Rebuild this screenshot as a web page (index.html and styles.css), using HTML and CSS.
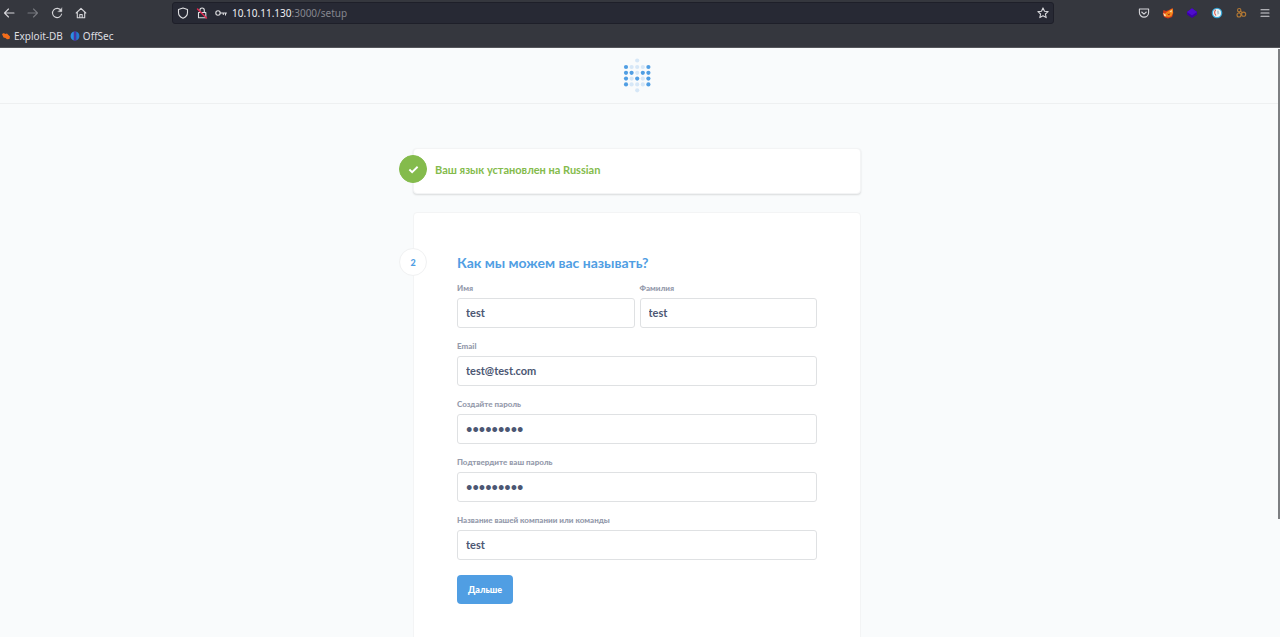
FILE: index.html
```html
<!DOCTYPE html>
<html lang="ru">
<head>
<meta charset="utf-8">
<meta name="viewport" content="width=device-width, initial-scale=1">
<title>Setup</title>
<link rel="stylesheet" href="styles.css">
</head>
<body>
<div class="browser">
  <div class="chrome">
    <div class="toolbar">
      <nav class="nav">
        <button type="button" class="tool" aria-label="Back"><svg viewBox="0 0 12 12"><path d="M11 6H1.500M5.500 2L1.500 6l4 4"/></svg></button>
        <button type="button" class="tool tool-off" aria-label="Forward"><svg viewBox="0 0 12 12"><path d="M1 6h9.500M6.500 2l4 4-4 4"/></svg></button>
        <button type="button" class="tool" aria-label="Reload"><svg viewBox="0 0 12 12"><path d="M10 3.500A4.600 4.600 0 1 0 10.600 7"/><path d="M10.900 1v3.700H7.200z" fill="currentColor" stroke-width=".4"/></svg></button>
        <button type="button" class="tool" aria-label="Home"><svg viewBox="0 0 12 12"><path d="M1.200 6L6 1.400 10.800 6M2.300 5.200v5.600h7.400V5.200M4.800 10.800V7.500h2.400v3.300"/></svg></button>
      </nav>
      <div class="address">
        <svg class="icon" viewBox="0 0 12 12"><path d="M6 1l4.500 1.600v3C10.500 8.400 8.600 10.300 6 11.300 3.400 10.300 1.500 8.400 1.500 5.600v-3z"/></svg>
        <svg class="icon" viewBox="0 0 12 12"><path d="M2.500 5.500h7.300v5.300H2.500zM3.900 5.500V3.200a2.200 2.200 0 0 1 4.400 0v2.300"/><path d="M1.500 2l9 9" stroke="#e22850" stroke-width="1.400"/></svg>
        <svg class="icon" viewBox="0 0 12 12"><circle cx="3" cy="6" r="2.200"/><path d="M5.200 6h6.300M10.500 6v2M8.300 6v1.500"/></svg>
        <span class="url"><b>10.10.11.130</b>:3000/setup</span>
        <button type="button" class="tool" aria-label="Bookmark"><svg viewBox="0 0 12 12"><path d="M6 .9l1.500 3.300 3.600.4-2.700 2.400.8 3.600L6 8.800l-3.200 1.800.8-3.600L.9 4.600l3.600-.4z"/></svg></button>
      </div>
      <div class="extensions">
        <button type="button" class="tool" aria-label="Pocket"><svg viewBox="0 0 12 12"><path d="M1.400 2h9.200v3.500a4.600 4.600 0 0 1-9.200 0zM3.700 5L6 7.100 8.300 5"/></svg></button>
        <button type="button" class="tool" aria-label="FoxyProxy"><svg class="flat" viewBox="0 0 12 12"><path d="M1.500 3L4 4l3-1 3.500-2 .8 5-1.200 4L6 11.500 2 10 .8 7z" fill="#d83a17"/><path d="M5 5l3-2 2.800-1.500.2 4L9.500 9 7 10 4 9.500 2.500 7z" fill="#f4871b"/><path d="M1.200 6l2 1 1 2.500-2-.5zM7.500 4.500L10 3l-.5 2.500z" fill="#fae2b0"/><path d="M5 6.500l1.500.5 1.800-.6L7 8.500z" fill="#9f2110"/></svg></button>
        <button type="button" class="tool" aria-label="Wappalyzer"><svg class="flat" viewBox="0 0 12 12"><path d="M6 1.300L11 5v2.500L6 11 1 7.500V5z" fill="#3b00a8"/><path d="M6 1.300L11 5 6 8.500 1 5z" fill="#4d0dcc"/></svg></button>
        <button type="button" class="tool" aria-label="Cookie manager"><svg class="flat" viewBox="0 0 12 12"><circle cx="6" cy="6" r="5.300" fill="#38a3d2"/><circle cx="6" cy="6" r="4" fill="#f1f5f7"/><path d="M4.500 3.200C3.200 4.500 3.500 7 4.800 8.200" fill="none" stroke="#db5545" stroke-width="1.100"/><path d="M5.800 3.500l2 .3.500 3-1.800 1z" fill="#b2cbd7"/></svg></button>
        <button type="button" class="tool tool-brown" aria-label="Extension"><svg viewBox="0 0 12 12"><circle cx="4.200" cy="3.200" r="1.700"/><circle cx="4" cy="8" r="2"/><circle cx="8.600" cy="7.200" r="2.100"/><path d="M5.500 4.200l1.700 1.500M4.200 5v1M6 8h1"/></svg></button>
        <button type="button" class="tool" aria-label="Menu"><svg viewBox="0 0 12 12"><path d="M2 2.800h8M2 6h8M2 9.200h8"/></svg></button>
      </div>
    </div>
    <div class="bookmarks">
      <a class="bookmark" href="#"><svg class="fav" viewBox="0 0 10 10"><path d="M1 3l2-1 1 1 2-.4L9 5.500 8.500 8 6 8.200 4.500 7 2.500 6.500z" fill="#f36d1b"/></svg>Exploit-DB</a>
      <a class="bookmark" href="#"><svg class="fav" viewBox="0 0 10 10"><path d="M3.800.4v9.200A4.900 4.900 0 0 1 3.800.4z" fill="#2d8de8"/><path d="M6.200.4v9.200A4.900 4.900 0 0 0 6.200.4z" fill="#2877d5"/><path d="M4.400.2h1.200v9.600H4.400z" fill="#5b34e8"/></svg>OffSec</a>
    </div>
  </div>
  <div class="viewport">
    <div class="page">
      <header class="header">
        <svg class="logo" viewBox="0 0 30 36" role="img" aria-label="Metabase">
          <g fill="#509ee3"><circle cx="4" cy="10" r="2.100"/><circle cx="26.400" cy="10" r="2.100"/><circle cx="4" cy="15.800" r="2.100"/><circle cx="9.600" cy="15.800" r="2.100"/><circle cx="20.800" cy="15.800" r="2.100"/><circle cx="26.400" cy="15.800" r="2.100"/><circle cx="4" cy="21.600" r="2.100"/><circle cx="15.200" cy="21.600" r="2.100"/><circle cx="26.400" cy="21.600" r="2.100"/><circle cx="4" cy="27.400" r="2.100"/><circle cx="26.400" cy="27.400" r="2.100"/></g>
          <g fill="#d6e7f7"><circle cx="15.200" cy="3.500" r="2.100"/><circle cx="9.600" cy="10" r="2.100"/><circle cx="15.200" cy="10" r="2.100"/><circle cx="20.800" cy="10" r="2.100"/><circle cx="15.200" cy="15.800" r="2.100"/><circle cx="9.600" cy="21.600" r="2.100"/><circle cx="20.800" cy="21.600" r="2.100"/><circle cx="9.600" cy="27.400" r="2.100"/><circle cx="15.200" cy="27.400" r="2.100"/><circle cx="20.800" cy="27.400" r="2.100"/><circle cx="15.200" cy="33.300" r="2.100"/></g>
        </svg>
      </header>
      <main class="content">
        <div class="steps">
          <section class="card card-done">
            <span class="marker marker-done"><svg viewBox="0 0 12 12"><path d="M1.500 6l3 3 6-6"/></svg></span>
            <h2 class="done-title">Ваш язык установлен на Russian</h2>
          </section>
          <section class="card card-active">
            <span class="marker">2</span>
            <h2 class="title">Как мы можем вас называть?</h2>
            <form class="form">
              <div class="row">
                <div class="field"><label for="first">Имя</label><input id="first" type="text" value="test"></div>
                <div class="field"><label for="last">Фамилия</label><input id="last" type="text" value="test"></div>
              </div>
              <div class="field"><label for="email">Email</label><input id="email" type="email" value="test@test.com"></div>
              <div class="field"><label for="pass">Создайте пароль</label><input id="pass" type="password" value="test12345"></div>
              <div class="field"><label for="confirm">Подтвердите ваш пароль</label><input id="confirm" type="password" value="test12345"></div>
              <div class="field"><label for="company">Название вашей компании или команды</label><input id="company" type="text" value="test"></div>
              <button type="button" class="submit">Дальше</button>
            </form>
          </section>
        </div>
      </main>
    </div>
    <div class="scrollbar"><div class="thumb"></div></div>
  </div>
</div>
</body>
</html>
```
FILE: styles.css
```css
* { box-sizing: border-box; }
body { margin: 0; font-family: Lato, "Liberation Sans", sans-serif; }
button, input { font: inherit; }
h2 { margin: 0; }

.browser { display: flex; flex-direction: column; height: 100vh; overflow: hidden; }

.chrome {
  flex: none;
  background: #35373e;
  border-bottom: 1px solid #55565b;
  color: #dedee1;
  font-family: "Noto Sans", sans-serif;
  font-size: 10px;
}
.toolbar { display: flex; align-items: center; padding: 2px 9px 2px 3px; }
.nav { display: flex; gap: 12px; width: 169px; }
.tool {
  display: block;
  flex: none;
  width: 12px;
  height: 12px;
  padding: 0;
  border: 0;
  background: none;
  color: #d6d6da;
}
.tool-off { color: #77797f; }
.tool-brown { color: #b27834; }
.tool svg, .icon {
  display: block;
  width: 12px;
  height: 12px;
  fill: none;
  stroke: currentColor;
  stroke-width: 1.1;
  stroke-linecap: round;
  stroke-linejoin: round;
}
.tool .flat { stroke: none; }
.address {
  display: flex;
  flex: 1;
  align-items: center;
  gap: 7px;
  height: 22px;
  padding: 0 4px;
  border: 1px solid #1e1f29;
  border-radius: 3px;
  background: #272934;
}
.url { flex: 1; margin-left: -2px; color: #85868e; }
.url b { color: #efeff2; font-weight: 400; }
.extensions { display: flex; justify-content: space-between; width: 217px; padding-left: 84px; }
.bookmarks { display: flex; gap: 7px; height: 21px; padding: 0 1px 1px; }
.bookmark { display: flex; align-items: center; gap: 3px; color: inherit; text-decoration: none; }
.fav { width: 10px; height: 10px; }

.viewport { display: flex; flex: 1; min-height: 0; background: #f9fbfc; }
.page { flex: 1; overflow: hidden; }
.scrollbar { width: 2px; padding-top: 1px; }
.thumb { height: 80%; background: #7d7f82; }

.header {
  display: flex;
  justify-content: center;
  padding: 9px 4px 10px 0;
  border-bottom: 1px solid #eef0f1;
}
.logo { width: 30px; height: 36px; }

.content { padding: 44px 4px 0 0; }
.steps {
  display: flex;
  flex-direction: column;
  gap: 18px;
  max-width: 448px;
  margin: 0 auto;
}
.card {
  position: relative;
  border: 1px solid #f3f4f5;
  border-radius: 4px;
  background: #fff;
}
.card-done { padding: 11px 21px 13px; box-shadow: 0 1px 2px rgba(0, 0, 0, 0.13); }
.card-active { padding: 39px 43px 60px; }
.done-title { color: #84bb4c; font-size: 11px; line-height: 20px; font-weight: 700; }
.title { color: #509ee3; font-size: 14px; line-height: 22px; font-weight: 700; }

.marker {
  position: absolute;
  top: 35px;
  left: -15px;
  display: flex;
  align-items: center;
  justify-content: center;
  width: 28px;
  height: 28px;
  border: 1px solid #f0f1f2;
  border-radius: 50%;
  background: #fff;
  color: #509ee3;
  font-size: 9px;
  font-weight: 900;
}
.marker-done { top: 6px; border-color: #84bb4c; background: #84bb4c; }
.marker-done svg { width: 11px; height: 11px; fill: none; stroke: #fff; stroke-width: 2; }

.form { display: flex; flex-direction: column; gap: 13px; margin-top: 9px; }
.row { display: flex; gap: 5px; }
.field { display: flex; flex: 1; flex-direction: column; gap: 4px; min-width: 0; }
.field label { color: #949aab; font-size: 8px; line-height: 11px; font-weight: 900; }
.field input {
  width: 100%;
  height: 30px;
  padding: 0 8px 2px;
  border: 1px solid #dfe1e3;
  border-radius: 3px;
  background: #fff;
  color: #4c5773;
  font-size: 11px;
  font-weight: 700;
}
.submit {
  align-self: flex-start;
  height: 29px;
  margin-top: 2px;
  padding: 0 11px;
  border: 0;
  border-radius: 4px;
  background: #509ee3;
  color: #fff;
  font-size: 9px;
  font-weight: 900;
}
```
